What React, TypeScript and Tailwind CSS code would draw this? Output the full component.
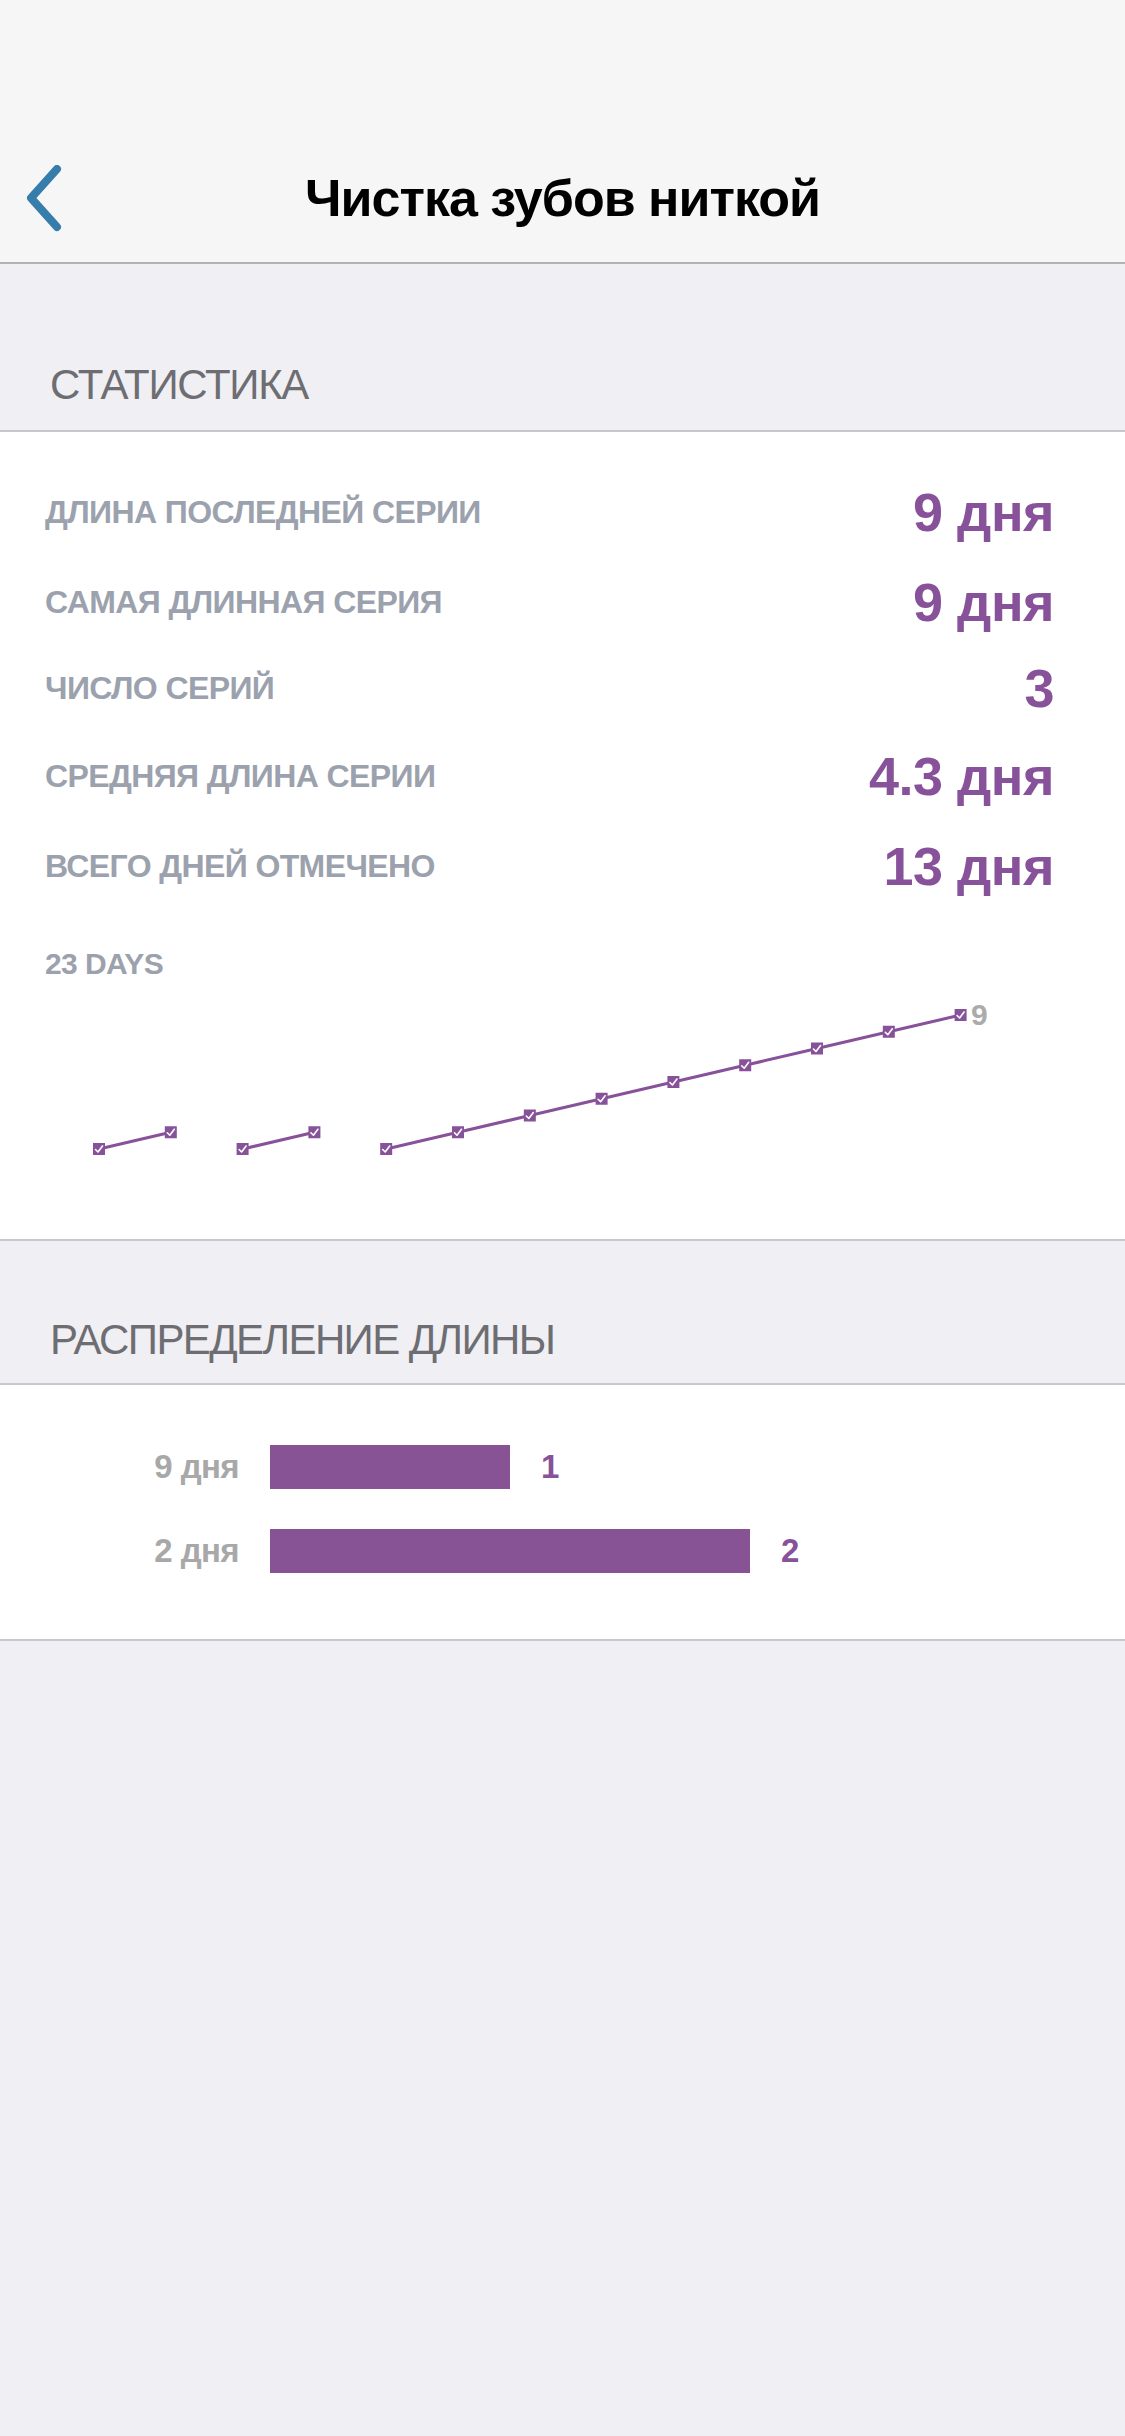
import { memo } from 'react'

const PURPLE = '#87529a'

interface StatRowProps {
  label: string
  value: string
  h?: string
}

const StatRow = memo(({ label, value, h = 'h-[90px]' }: StatRowProps) => (
  <div className={`flex ${h} items-center justify-between pl-[45px] pr-[71px]`}>
    <span className="text-[32px] font-bold uppercase tracking-[-0.6px] text-[#9ba2ad]">{label}</span>
    <span className="text-[54px] font-bold tracking-[-0.5px] text-[#87529a]">{value}</span>
  </div>
))

StatRow.displayName = 'StatRow'

// streaks: each number is the length of a run of consecutive days
const streaks = [2, 2, 9]

const StreakChart = () => {
  const x0 = 99
  const dx = 71.8
  const base = 142
  const dy = 16.75
  let idx = 0
  const groups = streaks.map((len) => {
    const pts = Array.from({ length: len }, (_, i) => ({ x: x0 + (idx + i) * dx, y: base - i * dy }))
    idx += len
    return pts
  })

  return (
    <div className="relative">
      <svg width="1125" height="232" viewBox="0 0 1125 232" className="block">
        {groups.map((pts, g) => (
          <g key={g}>
            <polyline
              points={pts.map((p) => `${p.x},${p.y}`).join(' ')}
              fill="none"
              stroke={PURPLE}
              strokeWidth="3"
            />
            {pts.map((p, i) => (
              <g key={i}>
                <rect x={p.x - 6} y={p.y - 6} width="12" height="12" fill={PURPLE} />
                <path
                  d={`M${p.x - 3.5} ${p.y + 0.5} L${p.x - 1} ${p.y + 3} L${p.x + 3.5} ${p.y - 3}`}
                  fill="none"
                  stroke="#fff"
                  strokeWidth="1.6"
                  strokeLinecap="round"
                  strokeLinejoin="round"
                />
              </g>
            ))}
          </g>
        ))}
      </svg>
      {/* подпись последней точки */}
      <span className="absolute left-[971px] top-[-7px] text-[30px] font-bold leading-none text-[#ababab]">9</span>
    </div>
  )
}

interface BarRowProps {
  label: string
  count: number
  width: number
}

const BarRow = ({ label, count, width }: BarRowProps) => (
  <div className="flex h-[44px] items-center">
    <span className="w-[239px] text-right text-[33px] font-bold tracking-[-0.6px] text-[#a8a8a8]">{label}</span>
    <div className="ml-[31px] h-[44px] bg-[#875394]" style={{ width }} />
    <span className="ml-[31px] text-[33px] font-bold text-[#87529a]">{count}</span>
  </div>
)

export default function App() {
  return (
    <div
      className="min-h-[2436px] bg-[#efeff4]"
      style={{ fontFamily: "'Liberation Sans', Arial, 'Noto Sans', sans-serif" }}
    >
      {/* навигация */}
      <div className="h-[264px] border-b-2 border-[#b2b2b2] bg-[#f6f6f6] pt-[134px]">
        <div className="relative flex h-[128px] items-center justify-center">
          <svg
            className="absolute left-[24px] top-[31px]"
            width="42"
            height="68"
            viewBox="0 0 42 68"
            fill="none"
          >
            <path
              d="M33 4 L7 33 L33 62"
              stroke="#377dab"
              strokeWidth="8"
              strokeLinecap="round"
              strokeLinejoin="round"
            />
          </svg>
          <h1 className="text-[52px] font-bold tracking-[-1px] text-black">Чистка зубов ниткой</h1>
        </div>
      </div>

      {/* статистика */}
      <div className="flex h-[166px] items-end pb-[24px] pl-[50px]">
        <span className="text-[42px] uppercase leading-none tracking-[-1.3px] text-[#6d6d72]">Статистика</span>
      </div>
      <div className="border-y-2 border-[#c8c7cc] bg-white pt-[35px]">
        <StatRow label="Длина последней серии" value="9 дня" />
        <StatRow label="Самая длинная серия" value="9 дня" />
        <StatRow label="Число серий" value="3" h="h-[82px]" />
        <StatRow label="Средняя длина серии" value="4.3 дня" h="h-[94px]" />
        <StatRow label="Всего дней отмечено" value="13 дня" h="h-[86px]" />
        <div className="flex h-[98px] items-center pl-[45px] pt-[10px]">
          <span className="text-[30px] font-bold tracking-[-0.6px] text-[#9ba2ad]">23 DAYS</span>
        </div>
        <StreakChart />
      </div>

      {/* распределение */}
      <div className="flex h-[142px] items-end pb-[22px] pl-[50px]">
        <span className="text-[42px] uppercase leading-none tracking-[-1.6px] text-[#6d6d72]">
          Распределение длины
        </span>
      </div>
      <div className="flex flex-col gap-[40px] border-y-2 border-[#c8c7cc] bg-white pb-[66px] pt-[60px]">
        <BarRow label="9 дня" count={1} width={240} />
        <BarRow label="2 дня" count={2} width={480} />
      </div>
    </div>
  )
}
